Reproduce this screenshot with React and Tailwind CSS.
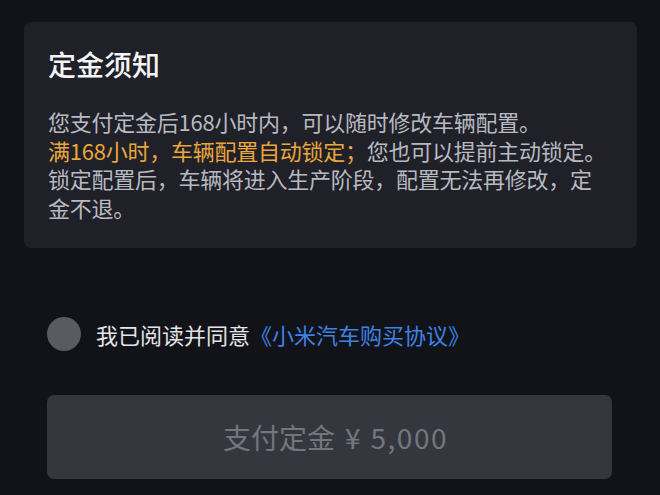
export default function App() {
  const agreed = false;

  return (
    <div className="min-h-[495px] bg-[#121319] pt-[22px] font-['Noto_Sans_CJK_SC','Noto_Sans',sans-serif]">
      {/* 定金须知 card */}
      <div className="ml-[24px] w-[613px] h-[226px] rounded-[7px] bg-[#1f2028] pl-[24px] pr-[28px] pt-[24px]">
        <h2 className="text-[28px] leading-[36px] font-medium text-[#f4f4f5]">定金须知</h2>
        <p className="mt-[25px] text-[22px] leading-[28.5px] tracking-[-0.25px] text-[#b8bac1]">
          您支付定金后168小时内，可以随时修改车辆配置。
          <br />
          <span className="text-[#e9a63c]">满168小时，车辆配置自动锁定；</span>
          您也可以提前主动锁定。锁定配置后，车辆将进入生产阶段，配置无法再修改，定金不退。
        </p>
      </div>

      <div className="pl-[47px] pr-[48px]">
        {/* Agreement row */}
        <div className="mt-[69px] flex items-center gap-[15px] h-[34px]">
          <span
            className={`w-[34px] h-[34px] rounded-full shrink-0 ${agreed ? "bg-[#3d7fe0]" : "bg-[#5a5b61]"}`}
          />
          <p className="text-[22px] leading-[34px] text-[#e4e5e8]">
            我已阅读并同意<span className="text-[#3f82e4]">《小米汽车购买协议》</span>
          </p>
        </div>

        {/* Pay button */}
        <button
          type="button"
          disabled
          className="mt-[44px] w-full h-[84px] rounded-[7px] bg-[#35373f] pl-[12px] text-[28px] text-[#74767d] flex items-center justify-center"
        >
          支付定金<span className="ml-[10px]">¥</span>
          <span className="ml-[10px] tracking-[1.5px]">5,000</span>
        </button>
      </div>
    </div>
  );
}
